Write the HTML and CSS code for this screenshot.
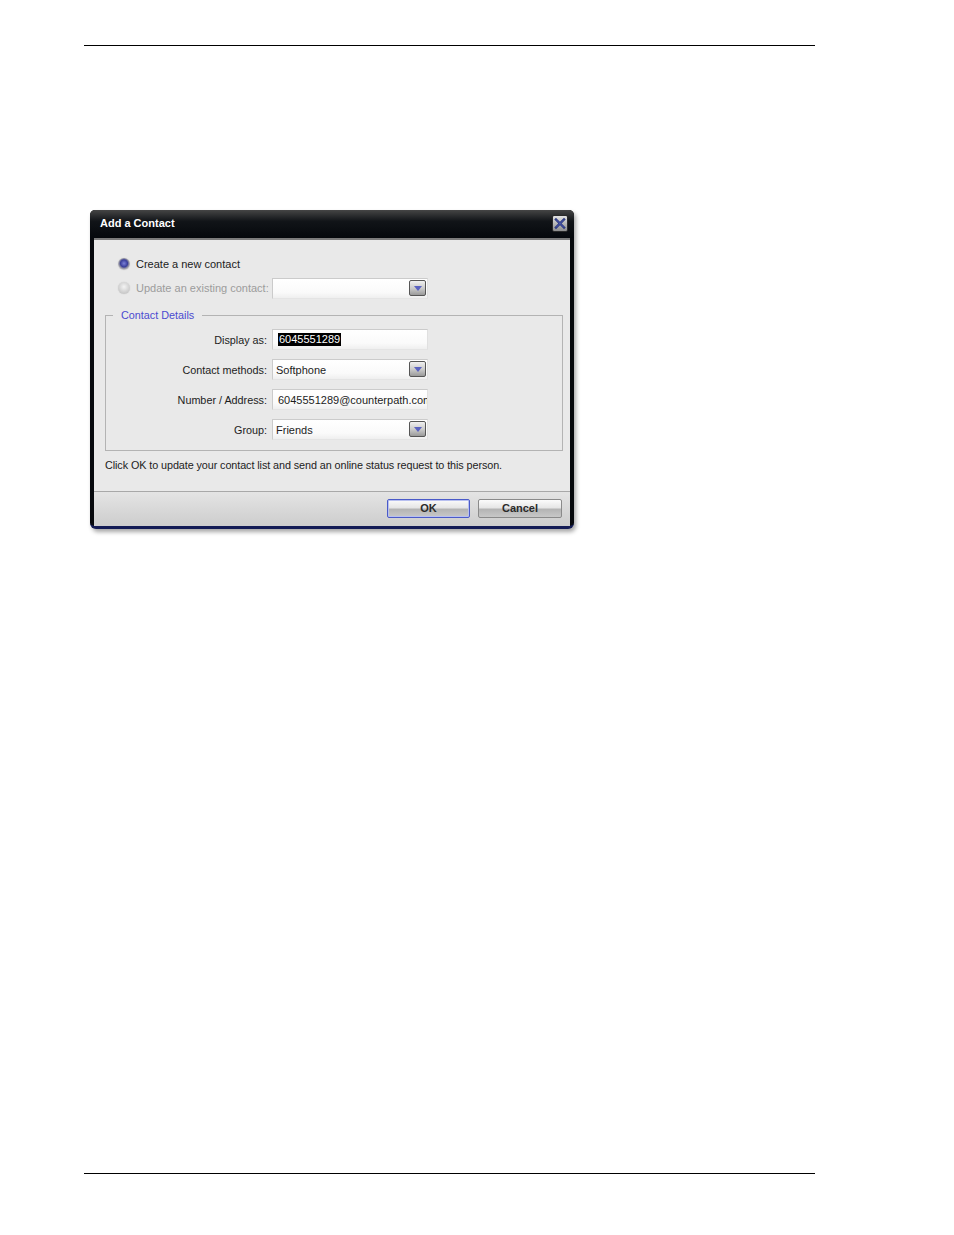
FILE: index.html
```html
<!doctype html>
<html lang="en">
<head>
	<meta charset="UTF-8" />
	<title>Add a Contact</title>
<link rel="stylesheet" href="styles.css">
</head>
<body>
	<section class="page">
		<div class="rule"></div>
		<div class="content">
			<div class="dialog">
				<div class="titlebar">
					<span class="title">Add a Contact</span>
					<a href="javascript:;" class="close">
						<svg width="16" height="17" viewBox="0 0 16 17">
							<path d="M4 4.5 L12 12.5 M12 4.5 L4 12.5" stroke="#26337a" stroke-width="2.4" stroke-linecap="square"/>
							<path d="M4 4.5 L12 12.5 M12 4.5 L4 12.5" stroke="#5d6bc4" stroke-width="0.8"/>
						</svg>
					</a>
				</div>
				<div class="panel">
					<div class="radio-row">
						<span class="radio checked"></span>
						<span>Create a new contact</span>
					</div>
					<div class="radio-row disabled">
						<span class="radio"></span>
						<span class="radio-label">Update an existing contact:</span>
						<div class="field combo"><span class="drop"><i></i></span></div>
					</div>

					<fieldset class="details">
						<legend>Contact Details</legend>
						<div class="form">
							<label>Display as:</label>
							<div class="field"><span class="sel">6045551289</span></div>
							<label>Contact methods:</label>
							<div class="field combo"><span class="value">Softphone</span><span class="drop"><i></i></span></div>
							<label>Number / Address:</label>
							<div class="field"><span class="value pad">6045551289@counterpath.com</span></div>
							<label>Group:</label>
							<div class="field combo"><span class="value">Friends</span><span class="drop"><i></i></span></div>
						</div>
					</fieldset>

					<p class="hint">Click OK to update your contact list and send an online status request to this person.</p>
				</div>
				<div class="footer">
					<a href="javascript:;" class="btn default">OK</a>
					<a href="javascript:;" class="btn">Cancel</a>
				</div>
			</div>
		</div>
		<div class="rule"></div>
	</section>
</body>
</html>
```

FILE: styles.css
```css
*{
	margin: 0;
	padding: 0;
	box-sizing: border-box;
}
body{
	background: #fff;
	font-family: "Liberation Sans", Arial, sans-serif;
	font-size: 11px;
	color: #1c1c1c;
}
.page{
	width: 731px;
	margin-left: 84px;
	padding-top: 45px;
}
.rule{
	height: 1px;
	background: #000;
}
.content{
	height: 1127px;
	padding-top: 164px;
}

/* dialog frame */
.dialog{
	width: 484px;
	margin-left: 6px;
	background: #07090d;
	border-radius: 5px 5px 6px 6px;
	padding: 0 4px 0 4px;
	border-bottom: 3px solid #131b55;
	box-shadow: 2px 3px 4px rgba(0,0,0,0.35);
}
.titlebar{
	height: 28px;
	margin: 0 -4px;
	padding: 0 6px 2px 10px;
	border-radius: 5px 5px 0 0;
	background: linear-gradient(#454545, #111418 40%, #05080c);
	display: flex;
	align-items: center;
	justify-content: space-between;
}
.title{
	color: #fff;
	font-weight: bold;
	font-size: 11px;
}
.close{
	display: block;
	width: 16px;
	height: 17px;
	margin-top: 1px;
	border: 1px solid #2a2a2a;
	border-radius: 2px;
	background: linear-gradient(#e2e2e2, #b8b8b8 50%, #8e8e8e);
	line-height: 0;
}
.close svg{
	margin: -1px 0 0 -1px;
}

/* body */
.panel{
	background: #e9e9e9;
	border-top: 2px solid #7c7c7c;
	padding: 14px 7px 19px 11px;
}
.radio-row{
	display: flex;
	align-items: center;
	height: 20px;
	padding-left: 13px;
}
.radio-row.disabled{
	height: 22px;
	margin-top: 3px;
	color: #9c9c9c;
}
.radio{
	width: 12px;
	height: 12px;
	border-radius: 50%;
	margin-right: 6px;
	background: radial-gradient(circle at 50% 40%, #f4f4f4, #cfcfcf 60%, #b8b8b8);
	box-shadow: 0 0 1px #bbb;
}
.radio.checked{
	background: radial-gradient(circle at 50% 45%, #7a80d8 0, #3a3f9a 40%, #8c8ca0 55%, #d0d0d0 75%, #b0b0b0);
}
.radio-label{
	width: 136px;
}

.field{
	position: relative;
	width: 156px;
	height: 21px;
	background: linear-gradient(#fff, #fafafa 70%, #efefef);
	border: 1px solid #cbcbcb;
	border-right-color: #e0e0e0;
	border-bottom-color: #e4e4e4;
	display: flex;
	align-items: center;
	overflow: hidden;
	white-space: nowrap;
	color: #1c1c1c;
}
.drop{
	position: absolute;
	right: 1px;
	top: 1px;
	width: 17px;
	height: 16px;
	border: 1px solid #555;
	border-radius: 2px;
	background: linear-gradient(#f0f0f0, #c8c8c8 55%, #9a9a9a);
}
.drop i{
	position: absolute;
	left: 4px;
	top: 5px;
	border-left: 4px solid transparent;
	border-right: 4px solid transparent;
	border-top: 5px solid #5a62c0;
}
.value{
	padding-left: 3px;
}
.value.pad{
	padding-left: 5px;
}
.sel{
	margin-left: 5px;
	background: #000;
	color: #fff;
	padding: 0 1px;
	line-height: 13px;
}

/* group box */
.details{
	margin: 9px 0 0 0;
	border: 1px solid #b3b3b3;
	padding: 7px 0 10px 0;
}
.details legend{
	margin-left: 7px;
	padding: 0 8px;
	color: #4b4bd0;
	line-height: 14px;
	font-size: 10.8px;
}
.form{
	display: grid;
	grid-template-columns: 161px 156px;
	grid-auto-rows: 21px;
	column-gap: 5px;
	row-gap: 9px;
	align-items: center;
}
.form label{
	text-align: right;
	font-size: 10.8px;
}

.hint{
	margin-top: 7px;
	line-height: 14px;
	font-size: 10.8px;
	letter-spacing: -0.08px;
}

/* footer */
.footer{
	border-top: 1px solid #a8a8a8;
	background: linear-gradient(#e4e4e4, #cdcdcd);
	height: 35px;
	padding: 7px 8px 0 0;
	display: flex;
	justify-content: flex-end;
	gap: 8px;
}
.btn{
	display: block;
	width: 83px;
	height: 19px;
	line-height: 17px;
	text-align: center;
	font-weight: bold;
	color: #2a2a2a;
	text-decoration: none;
	border: 1px solid #8a8a8a;
	border-radius: 2px;
	background: linear-gradient(#fbfbfb, #e6e6e6 45%, #b4b4b4 55%, #c8c8c8);
}
.btn + .btn{
	width: 84px;
}
.btn.default{
	border: 1px solid #4a5ac8;
	box-shadow: inset 0 0 0 1px #b8c0f0;
}
```
